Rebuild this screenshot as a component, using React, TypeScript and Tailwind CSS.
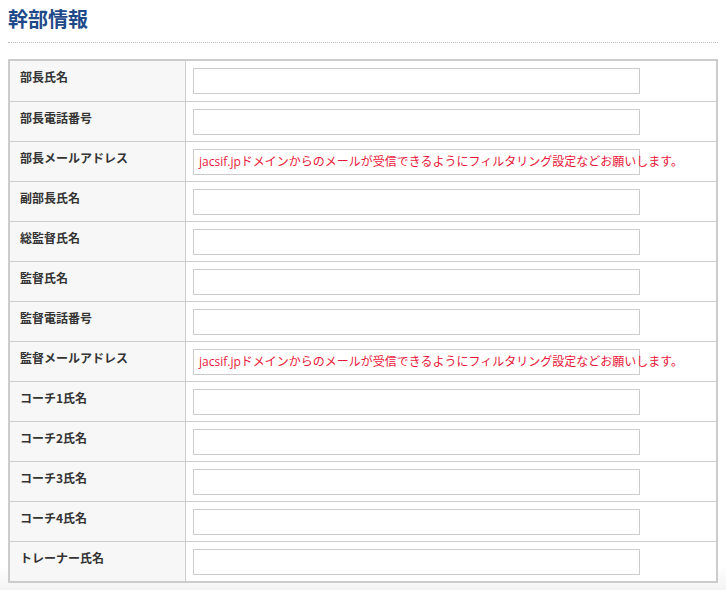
const rows: { label: string; note?: boolean }[] = [
  { label: '部長氏名' },
  { label: '部長電話番号' },
  { label: '部長メールアドレス', note: true },
  { label: '副部長氏名' },
  { label: '総監督氏名' },
  { label: '監督氏名' },
  { label: '監督電話番号' },
  { label: '監督メールアドレス', note: true },
  { label: 'コーチ1氏名' },
  { label: 'コーチ2氏名' },
  { label: 'コーチ3氏名' },
  { label: 'コーチ4氏名' },
  { label: 'トレーナー氏名' },
];

const NOTE = 'jacsif.jpドメインからのメールが受信できるようにフィルタリング設定などお願いします。';

export default function App() {
  return (
    <div
      className="min-h-[590px] bg-[linear-gradient(to_bottom,#fff_0%,#fff_96%,#f3f3f3_100%)] px-2 text-[#333]"
      style={{ fontFamily: '"Noto Sans CJK JP", "Open Sans", sans-serif' }}
    >
      <div className="w-[710px] border-b border-dotted border-[#bbb] pt-[4px] pb-[9px]">
        <h2 className="text-[20px] leading-[29px] font-bold text-[#1f4a8a]">幹部情報</h2>
      </div>

      <div className="mt-[16px] w-[710px] border-2 border-[#ccc] bg-white">
        {rows.map((row, i) => (
          <FieldRow key={row.label} label={row.label} note={row.note} first={i === 0} />
        ))}
      </div>
    </div>
  );
}

function FieldRow({ label, note, first }: { label: string; note?: boolean; first: boolean }) {
  return (
    <div className={`flex h-[40px] ${first ? 'h-[39px]' : 'border-t border-[#ccc]'}`}>
      <div className="w-[176px] shrink-0 border-r border-[#ccc] bg-[#f7f7f7] pl-[10px] pt-[7px] text-[12px] leading-[18px] font-bold">
        {label}
      </div>
      <div className="relative pl-[7px] pt-[7px]">
        <div className="h-[26px] w-[447px] border border-[#ccc] bg-white" />
        {note && (
          <span
            className="absolute left-[13px] top-[7px] whitespace-nowrap text-[12px] leading-[26px] text-[#e8173a]"
            style={{ fontFamily: '"Open Sans", "Noto Sans CJK JP", sans-serif' }}
          >
            {NOTE}
          </span>
        )}
      </div>
    </div>
  );
}
